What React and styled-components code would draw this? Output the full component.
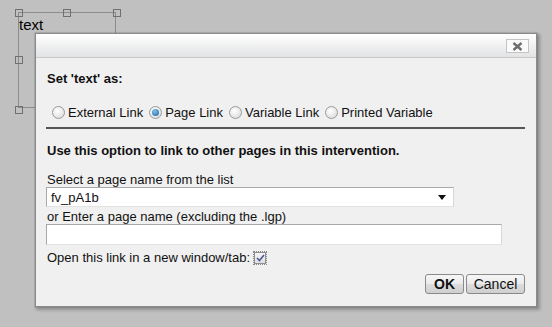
import React from 'react';
import styled, { createGlobalStyle } from 'styled-components';

const Global = createGlobalStyle`
  html, body { margin: 0; padding: 0; }
  body {
    background: #c0c0c0;
    font-family: "Liberation Sans", Arial, sans-serif;
    font-size: 13px;
    color: #111;
  }
`;

const Canvas = styled.div`
  position: relative;
  width: 552px;
  height: 327px;
  overflow: hidden;
`;

const Selection = styled.div`
  position: absolute;
  left: 18px;
  top: 12px;
  width: 98px;
  height: 96px;
  border: 1px solid #8c8c8c;
  box-sizing: border-box;
  font-size: 15px;
  line-height: 17px;
  color: #000;
  padding: 3px 0 0 0;
`;

const Handle = styled.span`
  position: absolute;
  width: 6px;
  height: 6px;
  border: 1px solid #707070;
  background: transparent;
  left: ${p => p.x}px;
  top: ${p => p.y}px;
`;

const Dialog = styled.div`
  position: absolute;
  left: 35px;
  top: 33px;
  width: 502px;
  height: 274px;
  box-sizing: border-box;
  border: 1px solid #8a8a8a;
  background: #f0f0f0;
  box-shadow: 0 0 0 1px rgba(0,0,0,0.08), 2px 2px 3px 1px rgba(0,0,0,0.25);
  display: flex;
  flex-direction: column;
`;

const TitleBar = styled.div`
  height: 24px;
  border-bottom: 1px solid #c8c8c8;
  background: linear-gradient(#ffffff, #e2e3e5);
  display: flex;
  justify-content: flex-end;
  align-items: flex-start;
  padding: 5px 7px 0 0;
  box-sizing: border-box;
`;

const CloseBtn = styled.div`
  width: 23px;
  height: 14px;
  box-sizing: border-box;
  border: 1px solid #c4c4c4;
  background: #fafafa;
  display: flex;
  align-items: center;
  justify-content: center;
`;

const Body = styled.div`
  flex: 1;
  padding: 13px 11px 0 10px;
  display: flex;
  flex-direction: column;
`;

const Line = styled.div`
  line-height: 15px;
  font-weight: ${p => (p.bold ? 700 : 400)};
  margin-top: ${p => p.mt || 0}px;
  padding-left: 1px;
  display: flex;
  align-items: center;
`;

const RadioRow = styled.div`
  display: flex;
  align-items: center;
  line-height: 15px;
  margin-top: 19px;
  padding-left: 6px;
`;

const Radio = styled.span`
  width: 11px;
  height: 11px;
  border-radius: 50%;
  border: 1px solid #9a9a9a;
  background: radial-gradient(circle at 40% 35%, #ffffff, #d6d6d6);
  display: inline-flex;
  align-items: center;
  justify-content: center;
  margin: 0 3px 0 0;
  &::after {
    content: '';
    display: ${p => (p.checked ? 'block' : 'none')};
    width: 7px;
    height: 7px;
    border-radius: 50%;
    background: radial-gradient(circle at 40% 35%, #7ec3f0, #1c5e9c);
  }
`;

const RadioLabel = styled.span`
  margin-right: 6px;
`;

const Rule = styled.div`
  height: 2px;
  background: #555;
  margin-top: 7px;
`;

const Field = styled.div`
  width: ${p => p.w}px;
  height: ${p => p.h}px;
  box-sizing: border-box;
  border: 1px solid #a9a9a9;
  border-right-color: #d8d8d8;
  border-bottom-color: #e3e3e3;
  background: #fff;
  display: flex;
  align-items: center;
  justify-content: space-between;
  padding: 0 7px 0 4px;
  font-size: 13px;
`;

const Check = styled.span`
  width: 12px;
  height: 12px;
  box-sizing: border-box;
  border: 1px solid #8e8f8f;
  outline: 1px dotted #888;
  outline-offset: 0px;
  background: linear-gradient(#f4f4f4, #dedede);
  display: inline-flex;
  align-items: center;
  justify-content: center;
  margin-left: 4px;
`;

const Footer = styled.div`
  margin-top: auto;
  padding-bottom: 12px;
  display: flex;
  justify-content: flex-end;
  gap: 2px;
`;

const Button = styled.button`
  height: 20px;
  width: ${p => p.w}px;
  border: 1px solid #8a8a8a;
  border-radius: 3px;
  background: linear-gradient(#f6f6f6 0%, #ebebeb 50%, #dddddd 51%, #cfcfcf 100%);
  font-family: "Liberation Sans", Arial, sans-serif;
  font-size: 14px;
  font-weight: ${p => (p.bold ? 700 : 400)};
  color: #111;
  padding: 0;
  line-height: 18px;
`;

export default function App() {
  return (
    <>
      <Global />
      <Canvas>
        <Selection>
          text
        </Selection>
        <Handle x={15} y={9} />
        <Handle x={63} y={9} />
        <Handle x={113} y={9} />
        <Handle x={15} y={56} />
        <Handle x={15} y={106} />
        <Dialog>
          <TitleBar>
            <CloseBtn>
              <svg width="11" height="9" viewBox="0 0 11 9">
                <path d="M1.5 1 L9.5 8 M9.5 1 L1.5 8" stroke="#6e6e6e" strokeWidth="2.4" />
              </svg>
            </CloseBtn>
          </TitleBar>
          <Body>
            <Line bold>Set 'text' as:</Line>
            <RadioRow>
              <Radio />
              <RadioLabel>External Link</RadioLabel>
              <Radio checked />
              <RadioLabel>Page Link</RadioLabel>
              <Radio />
              <RadioLabel>Variable Link</RadioLabel>
              <Radio />
              <RadioLabel>Printed Variable</RadioLabel>
            </RadioRow>
            <Rule />
            <Line bold mt={14}>Use this option to link to other pages in this intervention.</Line>
            <Line mt={14}>Select a page name from the list</Line>
            <Field w={408} h={20}>
              <span>fv_pA1b</span>
              <svg width="8" height="5" viewBox="0 0 8 5">
                <path d="M0 0 H8 L4 5 Z" fill="#111" />
              </svg>
            </Field>
            <Line mt={2}>or Enter a page name (excluding the .lgp)</Line>
            <Field w={456} h={21} />
            <Line mt={5}>
              Open this link in a new window/tab:
              <Check>
                <svg width="9" height="8" viewBox="0 0 9 8">
                  <path d="M1 4 L3.5 6.5 L8 1" stroke="#4a5a9a" strokeWidth="1.6" fill="none" />
                </svg>
              </Check>
            </Line>
            <Footer>
              <Button w={39} bold>OK</Button>
              <Button w={59}>Cancel</Button>
            </Footer>
          </Body>
        </Dialog>
      </Canvas>
    </>
  );
}
